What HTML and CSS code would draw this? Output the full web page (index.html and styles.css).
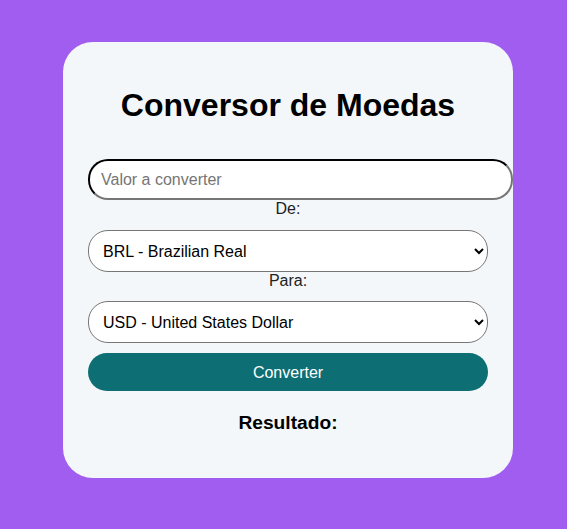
FILE: index.html
```html
<!DOCTYPE html>
<html lang="pt-BR">
<head>
<meta charset="UTF-8">
<title>Conversor de Moedas</title>
<link rel="stylesheet" href="styles.css">
</head>
<body>
  <main class="card">
    <h1 class="title">Conversor de Moedas</h1>
    <form class="form">
      <input class="amount" type="number" placeholder="Valor a converter">
      <label class="label" for="from">De:</label>
      <select class="select select-first" id="from">
        <option>BRL - Brazilian Real</option>
        <option>USD - United States Dollar</option>
      </select>
      <label class="label" for="to">Para:</label>
      <select class="select" id="to">
        <option>USD - United States Dollar</option>
        <option>BRL - Brazilian Real</option>
      </select>
      <button class="btn" type="button">Converter</button>
    </form>
    <h3 class="result">Resultado:</h3>
  </main>
</body>
</html>
```
FILE: styles.css
```css
html, body {
  margin: 0;
  height: 100%;
}
body {
  background: #a05df0;
  font-family: "Liberation Sans", Arial, sans-serif;
  display: flex;
  justify-content: center;
  align-items: flex-start;
  padding-left: 9px;
  box-sizing: border-box;
}
.card {
  margin-top: 42px;
  width: 400px;
  padding: 25px 25px 44px;
  background: #f3f7f9;
  border-radius: 30px;
}
.title {
  margin: 20px 0 35px;
  font-size: 32px;
  font-weight: bold;
  text-align: center;
  color: #000;
  line-height: 37px;
}
.form {
  display: flex;
  flex-direction: column;
  align-items: flex-start;
}
.amount {
  width: 100%;
  height: 17px;
  padding: 10px 10px 10px 11px;
  font-family: "Liberation Sans", Arial, sans-serif;
  font-size: 16px;
  border: 2px inset #767676;
  border-top-color: #222;
  border-left-color: #222;
  border-radius: 20px;
  background: #fff;
  outline: none;
  margin: 0 -2px 0 0;
}
.amount::placeholder {
  color: #757575;
}
.label {
  align-self: center;
  font-size: 16px;
  line-height: 18px;
  color: #222;
}
.select {
  width: 400px;
  height: 42px;
  box-sizing: border-box;
  margin-top: 11px;
  padding: 0 10px;
  font-family: "Liberation Sans", Arial, sans-serif;
  font-size: 16px;
  color: #000;
  background: #fff;
  border: 1px solid #767676;
  border-radius: 20px;
}
.select-first {
  margin-top: 12px;
}
.btn {
  margin-top: 10px;
  width: 400px;
  height: 38px;
  padding-top: 2px;
  border: none;
  border-radius: 20px;
  background: #0d6e73;
  color: #fff;
  font-family: "Liberation Sans", Arial, sans-serif;
  font-size: 16px;
}
.result {
  margin: 20px 0 0;
  font-size: 19.2px;
  line-height: 23px;
  text-align: center;
  font-weight: bold;
}
```
